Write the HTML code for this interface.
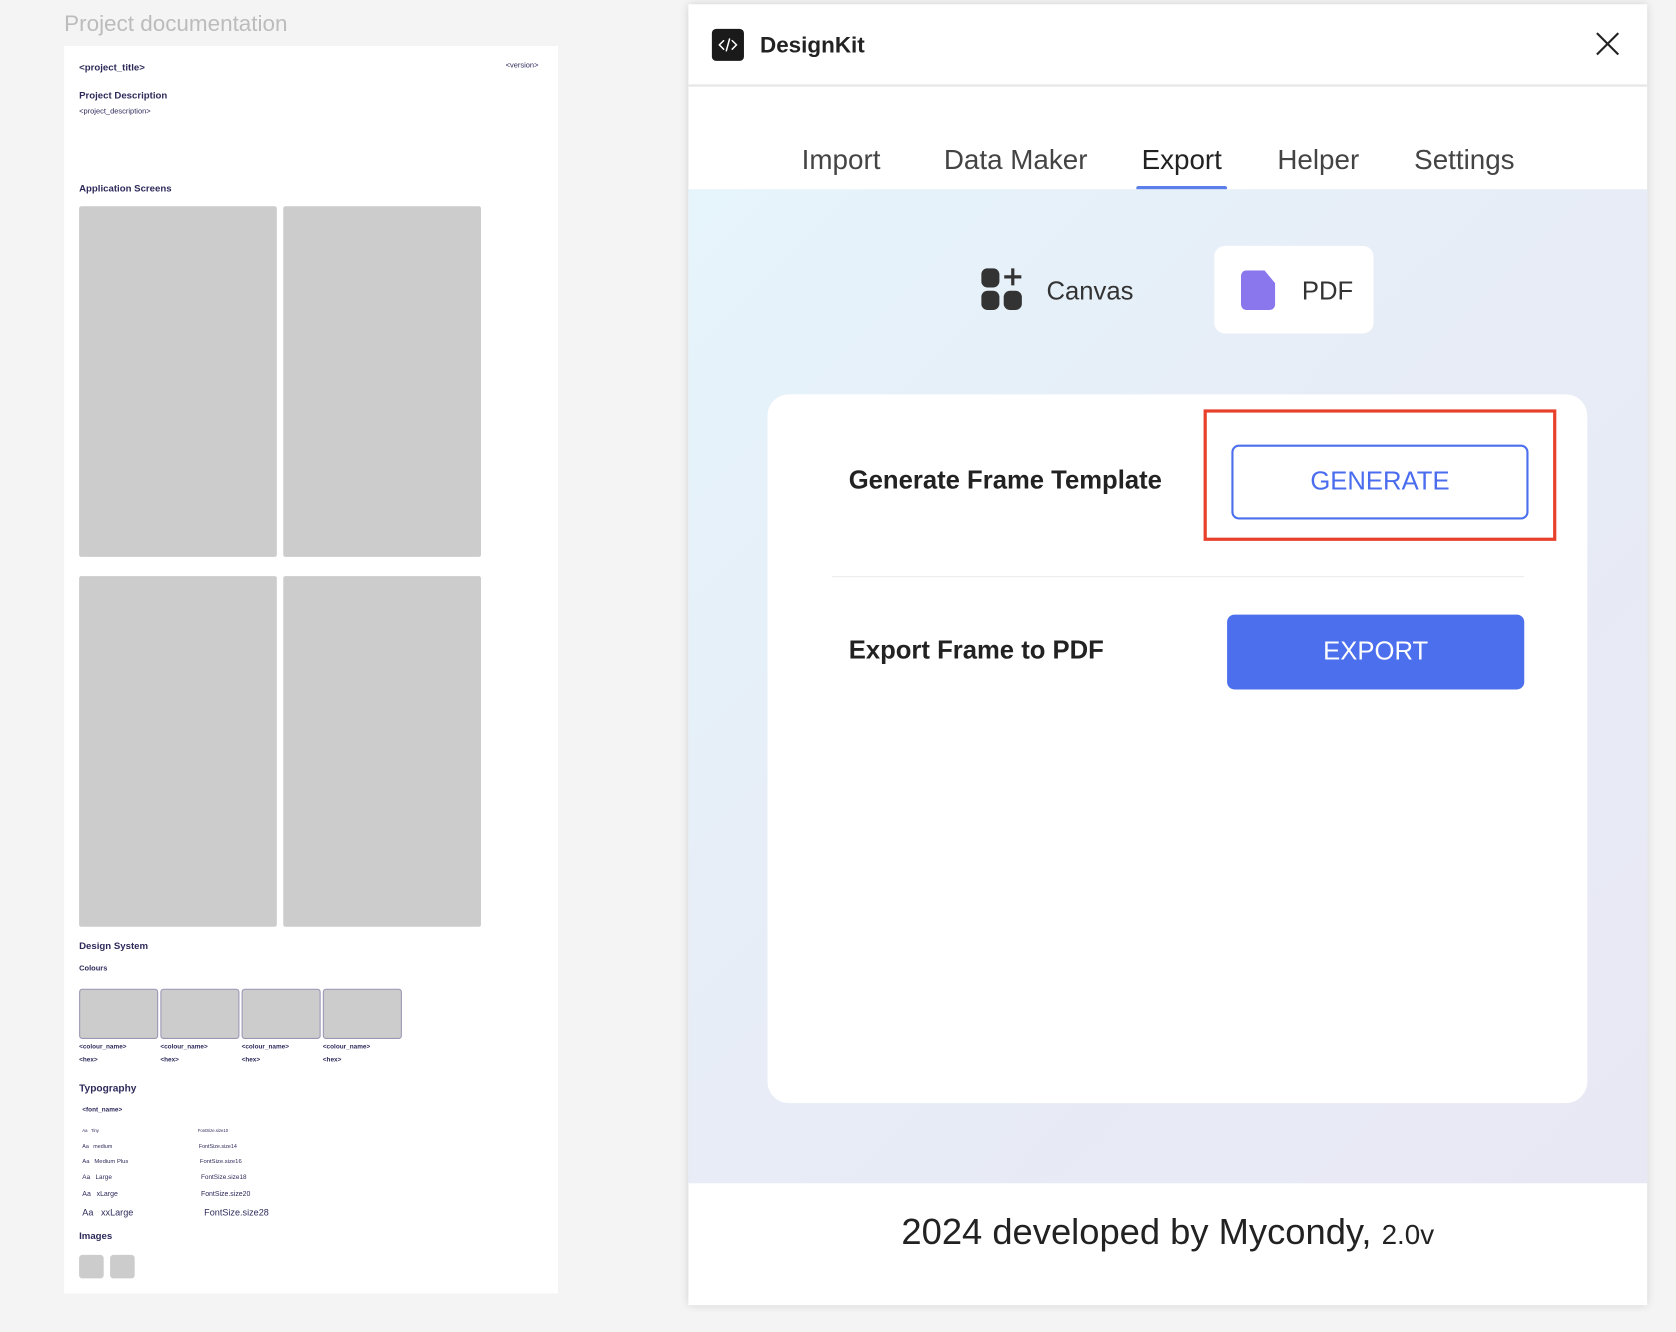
<!DOCTYPE html>
<html><head><meta charset="utf-8"><style>
html,body{margin:0;padding:0;width:1676px;height:1332px;overflow:hidden;background:#f4f4f4;font-family:"Liberation Sans",Arial,sans-serif}
#w{position:absolute;left:0;top:0;width:1568px;height:1246px;transform:scale(1.0689);transform-origin:0 0}
.a{position:absolute;white-space:nowrap}
.d{color:#2d2a5a}
.g{position:absolute;background:#cccccc;border-radius:2px}
.c{position:absolute;background:#cccccc;border:1px solid #9a96b4;border-radius:3px;top:925px;width:72px;height:45px}
.t{position:absolute;top:129px;font-size:26px;color:#444;line-height:32px}
</style></head><body><div id="w">
<div class="a" style="left:60px;top:11px;font-size:21px;color:#bcbcbc">Project documentation</div>
<div style="position:absolute;left:60px;top:43px;width:462px;height:1167px;background:#fff"></div>
<div class="a d" style="left:74px;top:58px;font-size:9px;font-weight:bold">&lt;project_title&gt;</div>
<div class="a d" style="left:473px;top:58px;font-size:7px">&lt;version&gt;</div>
<div class="a d" style="left:74px;top:84px;font-size:9px;font-weight:bold">Project Description</div>
<div class="a d" style="left:74px;top:101px;font-size:7px">&lt;project_description&gt;</div>
<div class="a d" style="left:74px;top:171px;font-size:9px;font-weight:bold">Application Screens</div>
<div class="g" style="left:74px;top:193px;width:185px;height:328px"></div>
<div class="g" style="left:265px;top:193px;width:185px;height:328px"></div>
<div class="g" style="left:74px;top:539px;width:185px;height:328px"></div>
<div class="g" style="left:265px;top:539px;width:185px;height:328px"></div>
<div class="a d" style="left:74px;top:880px;font-size:9px;font-weight:bold">Design System</div>
<div class="a d" style="left:74px;top:903px;font-size:7px;font-weight:bold">Colours</div>
<div class="c" style="left:74px"></div><div class="c" style="left:150px"></div><div class="c" style="left:226px"></div><div class="c" style="left:302px"></div>
<div class="a d" style="left:74px;top:977px;font-size:6px;font-weight:bold">&lt;colour_name&gt;</div>
<div class="a d" style="left:150px;top:977px;font-size:6px;font-weight:bold">&lt;colour_name&gt;</div>
<div class="a d" style="left:226px;top:977px;font-size:6px;font-weight:bold">&lt;colour_name&gt;</div>
<div class="a d" style="left:302px;top:977px;font-size:6px;font-weight:bold">&lt;colour_name&gt;</div>
<div class="a d" style="left:74px;top:989px;font-size:6px;font-weight:bold">&lt;hex&gt;</div>
<div class="a d" style="left:150px;top:989px;font-size:6px;font-weight:bold">&lt;hex&gt;</div>
<div class="a d" style="left:226px;top:989px;font-size:6px;font-weight:bold">&lt;hex&gt;</div>
<div class="a d" style="left:302px;top:989px;font-size:6px;font-weight:bold">&lt;hex&gt;</div>
<div class="a d" style="left:74px;top:1013px;font-size:9.5px;font-weight:bold">Typography</div>
<div class="a d" style="left:77px;top:1036px;font-size:6px;font-weight:bold">&lt;font_name&gt;</div>
<div class="a d" style="left:77px;top:1055px;font-size:4px">Aa &nbsp; Tiny</div><div class="a d" style="left:185px;top:1055px;font-size:4px">FontSize.size10</div>
<div class="a d" style="left:77px;top:1070px;font-size:5px">Aa &nbsp; medium</div><div class="a d" style="left:186px;top:1070px;font-size:5px">FontSize.size14</div>
<div class="a d" style="left:77px;top:1084px;font-size:5.5px">Aa &nbsp; Medium Plus</div><div class="a d" style="left:187px;top:1084px;font-size:5.5px">FontSize.size16</div>
<div class="a d" style="left:77px;top:1099px;font-size:6px">Aa &nbsp; Large</div><div class="a d" style="left:188px;top:1099px;font-size:6px">FontSize.size18</div>
<div class="a d" style="left:77px;top:1114px;font-size:6.5px">Aa &nbsp; xLarge</div><div class="a d" style="left:188px;top:1114px;font-size:6.5px">FontSize.size20</div>
<div class="a d" style="left:77px;top:1129px;font-size:8.5px">Aa &nbsp; xxLarge</div><div class="a d" style="left:191px;top:1129px;font-size:8.5px">FontSize.size28</div>
<div class="a d" style="left:74px;top:1151px;font-size:9px;font-weight:bold">Images</div>
<div class="g" style="left:74px;top:1174px;width:23px;height:22px;border-radius:3px"></div>
<div class="g" style="left:103px;top:1174px;width:23px;height:22px;border-radius:3px"></div>

<div style="position:absolute;left:644px;top:4px;width:897px;height:1217px;background:#fff;box-shadow:0 0 8px rgba(0,0,0,.15)">
 <div style="position:absolute;left:0;top:75px;width:897px;height:2px;background:#e6e6e6"></div>
 <div style="position:absolute;left:22px;top:23px;width:30px;height:30px;background:#1a1a1a;border-radius:4px">
  <svg width="30" height="30" viewBox="0 0 30 30"><path d="M11 11l-4 4 4 4M19 11l4 4-4 4M16.5 9.5l-3 11" stroke="#fff" stroke-width="1.4" fill="none" stroke-linecap="round"/></svg>
 </div>
 <div class="a" style="left:67px;top:27px;font-size:21px;font-weight:bold;color:#222">DesignKit</div>
 <svg style="position:absolute;left:849px;top:26px" width="22" height="22"><path d="M1 1L21 21M21 1L1 21" stroke="#222" stroke-width="2"/></svg>
 <div class="t" style="left:106px">Import</div>
 <div class="t" style="left:239px">Data Maker</div>
 <div class="t" style="left:424px;color:#222">Export</div>
 <div class="t" style="left:551px">Helper</div>
 <div class="t" style="left:679px">Settings</div>
 <div style="position:absolute;left:419px;top:170px;width:85px;height:4px;background:#5b7fe8;border-radius:2px"></div>
 <div style="position:absolute;left:0;top:173px;width:897px;height:930px;background:linear-gradient(135deg,#e6f4fb 0%,#e7ecf6 50%,#e8e8f4 100%)">
  <svg style="position:absolute;left:274px;top:74px" width="40" height="40" viewBox="0 0 40 40"><rect x="0" y="0" width="17" height="18" rx="6" fill="#333"/><rect x="0" y="21" width="17" height="18" rx="6" fill="#333"/><rect x="21" y="21" width="17" height="18" rx="6" fill="#333"/><path d="M29.5 0v16M21.5 8h16" stroke="#333" stroke-width="3"/></svg>
  <div class="a" style="left:335px;top:82px;font-size:24px;color:#333">Canvas</div>
  <div style="position:absolute;left:492px;top:53px;width:149px;height:82px;background:#fff;border-radius:10px">
   <svg style="position:absolute;left:25px;top:23px" width="32" height="37" viewBox="0 0 32 37"><path d="M6 0H22L32 12V31Q32 37 26 37H6Q0 37 0 31V6Q0 0 6 0Z" fill="#8a77ee"/></svg>
   <div class="a" style="left:82px;top:29px;font-size:24px;color:#333">PDF</div>
  </div>
  <div style="position:absolute;left:74px;top:192px;width:767px;height:663px;background:#fff;border-radius:20px">
   <div class="a" style="left:76px;top:67px;font-size:24px;font-weight:bold;color:#222">Generate Frame Template</div>
   <div style="position:absolute;left:408px;top:14px;width:324px;height:117px;border:3px solid #e8412b"></div>
   <div style="position:absolute;left:434px;top:47px;width:274px;height:66px;border:2px solid #4c6fee;border-radius:7px;color:#4a6cee;font-size:24px;text-align:center;line-height:66px">GENERATE</div>
   <div style="position:absolute;left:60px;top:170px;width:648px;height:1px;background:#ebebeb"></div>
   <div class="a" style="left:76px;top:226px;font-size:24px;font-weight:bold;color:#222">Export Frame to PDF</div>
   <div style="position:absolute;left:430px;top:206px;width:278px;height:70px;background:#4c6fee;border-radius:7px;color:#fff;font-size:24px;text-align:center;line-height:70px">EXPORT</div>
  </div>
 </div>
 <div class="a" style="left:0;width:897px;top:1130px;text-align:center;font-size:34px;color:#222">2024 developed by Mycondy, <span style="font-size:26px">2.0v</span></div>
</div>
</div></body></html>
